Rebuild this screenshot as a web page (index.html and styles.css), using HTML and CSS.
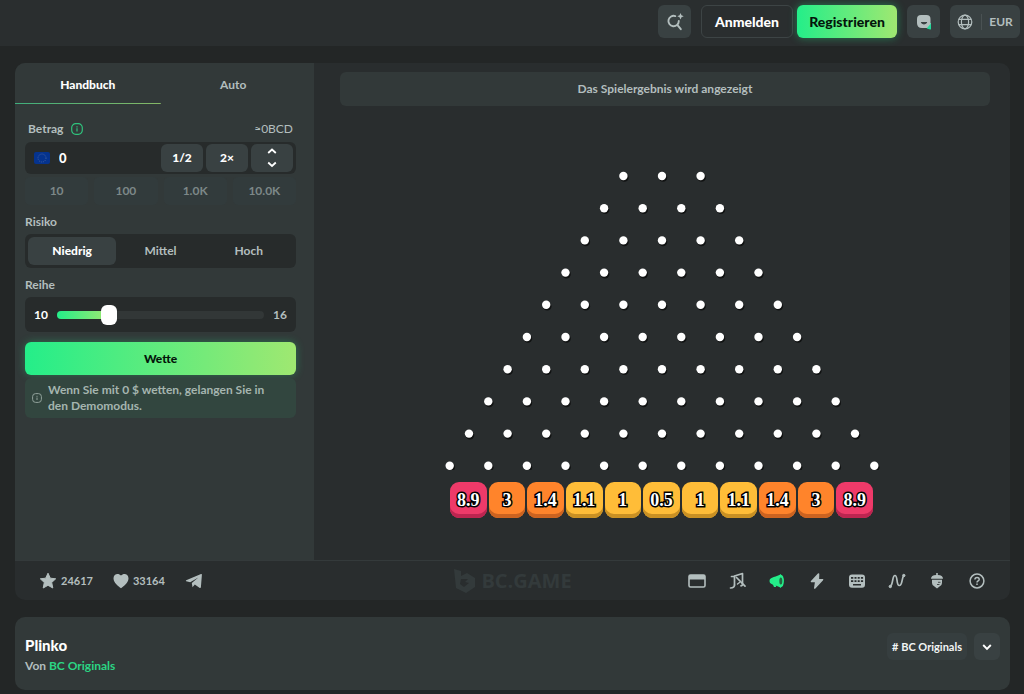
FILE: index.html
```html
<!DOCTYPE html>
<html lang="de">
<head>
<meta charset="utf-8">
<meta name="viewport" content="width=device-width, initial-scale=1">
<title>Plinko</title>
<link rel="stylesheet" href="styles.css">
</head>
<body>
<header class="topbar">
  <button class="icon-btn" aria-label="Suche"><svg width="18" height="18" viewBox="0 0 18 18" fill="none" stroke="#b3bebe" stroke-width="1.900" stroke-linecap="round"><path d="M9.300 3.100A5.200 5.200 0 1 0 12.800 8M11.300 11.800l3.500 4.400"/><path d="M14.500 0l1 2.200 2.200 1-2.200 1-1 2.200-1-2.200-2.200-1 2.200-1z" fill="#b3bebe" stroke="none"/></svg></button>
  <button class="btn-login">Anmelden</button>
  <button class="btn-register">Registrieren</button>
  <button class="icon-btn chat" aria-label="Chat"><svg width="16" height="16" viewBox="0 0 16 16"><path d="M9 9h6v6.500q-4 0-6-3z" fill="#25d99a"/><path d="M5 1h5.500q4 0 4 4v5l-3.500 4H6q-5 0-5-5V5q0-4 4-4z" fill="#b3bebe"/><path d="M5.500 8.500q2.500 2.600 5 0z" stroke="#394142" stroke-width="1.200" fill="#394142" stroke-linejoin="round"/></svg></button>
  <button class="locale"><svg width="16" height="16" viewBox="0 0 16 16" fill="none" stroke="#b3bebe" stroke-width="1.200"><circle cx="8" cy="8" r="6.800"/><ellipse cx="8" cy="8" rx="3.600" ry="6.800"/><path d="M2 5.300h12M2 10.700h12"/></svg><span class="currency">EUR</span></button>
</header>

<main class="page">
  <section class="game">
    <div class="game-main">
      <form class="sidebar" onsubmit="return false">
        <div class="tabs">
          <button type="button" class="tab active">Handbuch</button>
          <button type="button" class="tab">Auto</button>
        </div>
        <div class="controls">
          <div class="bet-head">
            <label for="bet">Betrag</label>
            <svg width="12" height="12" viewBox="0 0 12 12" fill="none" stroke="#2fc27c" stroke-width="1.200"><rect x=".7" y=".7" width="10.600" height="10.600" rx="4"/><path d="M6 5.300v3.200M6 3.200v1.200"/></svg>
            <span class="approx">≈0BCD</span>
          </div>
          <div class="bet-box">
            <svg width="16" height="12" viewBox="0 0 16 12"><rect width="16" height="12" rx="2" fill="#05338e"/><circle cx="8" cy="6" r="4" fill="none" stroke="#4562a0" stroke-width="1" stroke-dasharray="1 1.100"/></svg>
            <input id="bet" class="bet-input" type="text" value="0">
            <button type="button" class="step">1/2</button>
            <button type="button" class="step">2×</button>
            <button type="button" class="step" aria-label="Einsatz ändern"><svg width="10" height="20" viewBox="0 0 10 20" fill="none" stroke="#fff" stroke-width="1.800"><path d="M1.200 5L5 1.500 8.800 5M1.200 14.500L5 18l3.800-3.500"/></svg></button>
          </div>
          <div class="chips">
            <button type="button" class="chip">10</button>
            <button type="button" class="chip">100</button>
            <button type="button" class="chip">1.0K</button>
            <button type="button" class="chip">10.0K</button>
          </div>
          <div class="field-label">Risiko</div>
          <div class="segmented">
            <button type="button" class="segment active">Niedrig</button>
            <button type="button" class="segment">Mittel</button>
            <button type="button" class="segment">Hoch</button>
          </div>
          <label class="field-label" for="rows">Reihe</label>
          <div class="slider">
            <span class="slider-value">10</span>
            <div class="slider-stack">
              <div class="slider-track"><div class="slider-fill"></div></div>
              <input id="rows" class="slider-input" type="range" min="8" max="16" value="10">
            </div>
            <span class="slider-max">16</span>
          </div>
          <button type="submit" class="bet-btn">Wette</button>
          <div class="note">
            <svg width="10" height="10" viewBox="0 0 10 10" fill="none" stroke="#92a39c" stroke-width="1"><rect x=".6" y=".6" width="8.800" height="8.800" rx="3"/><path d="M5 4.500V7M5 2.800v1"/></svg>
            <p>Wenn Sie mit 0 $ wetten, gelangen Sie in den Demomodus.</p>
          </div>
        </div>
      </form>
      <div class="stage">
        <div class="result">Das Spielergebnis wird angezeigt</div>
        <div class="board">
          <svg class="pins" viewBox="0 0 436 300" role="img" aria-label="Plinko"></svg>
          <div class="buckets">
            <div class="bucket red">8.9</div><div class="bucket orange">3</div><div class="bucket orange">1.4</div><div class="bucket yellow">1.1</div><div class="bucket yellow">1</div><div class="bucket yellow">0.5</div><div class="bucket yellow">1</div><div class="bucket yellow">1.1</div><div class="bucket orange">1.4</div><div class="bucket orange">3</div><div class="bucket red">8.9</div>
          </div>
        </div>
      </div>
    </div>
    <div class="game-foot">
      <div class="social">
        <button class="stat"><svg width="18" height="18" viewBox="0 0 18 18" fill="#b3bebe" stroke="#b3bebe" stroke-width="1" stroke-linejoin="round"><path d="M9 1.200l2.300 5 5.400.6-4 3.700 1.100 5.500L9 13.300 4.200 16l1.100-5.500-4-3.700 5.400-.6z"/></svg>24617</button>
        <button class="stat"><svg width="16" height="16" viewBox="0 0 16 16" fill="#b3bebe"><path d="M8 15.300C5.500 13.500.5 10 .5 5.300.5.800 5.600-.3 8 2.600c2.400-2.900 7.500-1.800 7.500 2.700 0 4.700-5 8.200-7.500 10z"/></svg>33164</button>
        <button class="stat" aria-label="Teilen"><svg width="18" height="16" viewBox="0 0 18 16" fill="#b3bebe"><path d="M1.200 7.300L16 1q1-.3.900.7l-1 12.500q-.3 1.300-1.500.5L9.800 11.600 7.500 14.200 6.800 10l6.500-5.500L5.200 9.200 1.200 8.200q-.8-.5 0-.9z"/></svg></button>
      </div>
      <div class="brand"><svg width="24" height="26" viewBox="0 0 24 26"><path d="M1 1l7 2v5l6-3 8 5v9l-9 6-10-5z" fill="#333a3b"/><path d="M8 11l7 0-3 3 4 1-5 4-4-3z" fill="#292d2e"/></svg>BC.GAME</div>
      <div class="tools">
        <button class="tool" aria-label="Theatermodus"><svg width="18" height="14" viewBox="0 0 18 14"><rect x="1" y="1" width="16" height="12" rx="1.500" fill="none" stroke="#b3bebe" stroke-width="1.600"/><path d="M1 1h16v4.500H1z" fill="#b3bebe"/></svg></button>
        <button class="tool" aria-label="Musik"><svg width="18" height="18" viewBox="0 0 18 18" fill="none" stroke="#b3bebe" stroke-width="1.700" stroke-linecap="round" stroke-linejoin="round"><path d="M6.500 13V4L14.500 1.500V12"/><path d="M6.500 13q0 2.800-4 3M14.500 12.500q0 1-1.500 1.300M3.500 4.500h3M8.500 5.500l8.500 8.700"/><path d="M9.500 12l2-1.500" stroke-width="1.400"/></svg></button>
        <button class="tool" aria-label="Ton"><svg width="18" height="18" viewBox="0 0 18 18"><path d="M13 2C9 5 1.500 4.800 1.500 9S9 13 13 16z" fill="#24ee89"/><path d="M4.500 11.500L6 15h2.200l-.7-3z" fill="#24ee89"/><ellipse cx="13" cy="9" rx="2.900" ry="6.200" fill="#24ee89"/><ellipse cx="12.800" cy="9" rx="1.500" ry="3.600" fill="#246743"/></svg></button>
        <button class="tool" aria-label="Turbo"><svg width="16" height="18" viewBox="0 0 16 18" fill="#b3bebe" stroke="#b3bebe" stroke-width="1.600" stroke-linejoin="round"><path d="M9.500 2L2.500 9.500h4.300l-1 6.500 7.700-8.300H9.300z"/></svg></button>
        <button class="tool" aria-label="Tastatur"><svg width="18" height="16" viewBox="0 0 18 16"><rect x="1" y="1.500" width="16" height="13.300" rx="3" fill="#b3bebe"/><path d="M3 4h2.300v1.700H3zM6.500 4h2v1.700h-2zM9.700 4h2v1.700h-2zM12.900 4h2.200v1.700h-2.200zM3 7.200h2.300v1.900H3zM6.500 7.200h2v1.900h-2zM9.700 7.200h2v1.900h-2zM12.900 7.200h2.200v1.900h-2.200zM5 11h8v1.500H5z" fill="#292d2e"/></svg></button>
        <button class="tool" aria-label="Trends"><svg width="18" height="16" viewBox="0 0 18 16" fill="none" stroke="#b3bebe" stroke-width="1.700"><path d="M2.300 13.500C5.500 11 4 2.500 7 2.500S8 12.500 11.300 12.500 13.500 5 15.800 2.700"/><circle cx="2.300" cy="13.500" r="1.200" fill="#b3bebe" stroke-width="1"/><circle cx="15.800" cy="2.500" r="1.200" fill="#b3bebe" stroke-width="1"/></svg></button>
        <button class="tool" aria-label="Seed"><svg width="14" height="18" viewBox="0 0 14 18" fill="#b3bebe"><path d="M6.200 1h1.600v2q5.200.3 5.200 3.800H1Q1 3.300 6.200 3z"/><path d="M2 7.800h10V11q0 2.500-2.500 3.600L7 16.500l-2.500-1.900Q2 13.500 2 11z"/><path d="M8 10.300h2.500M7 12.500h2.500" stroke="#292d2e" stroke-width=".8"/></svg></button>
        <button class="tool" aria-label="Hilfe"><svg width="16" height="16" viewBox="0 0 16 16" fill="none" stroke="#b3bebe" stroke-width="1.500"><circle cx="8" cy="8" r="6.900"/><path d="M5.900 6.600c0-3 4.400-2.800 4.300-.2 0 1.500-2.200 1.500-2.200 3.100M8 10.600v1.400"/></svg></button>
      </div>
    </div>
  </section>

  <section class="info">
    <div class="info-text">
      <h1 class="title">Plinko</h1>
      <p class="by">Von <a class="provider" href="#">BC Originals</a></p>
    </div>
    <div class="info-actions">
      <a class="tag" href="#"># BC Originals</a>
      <button class="expand" aria-label="Mehr anzeigen"><svg width="10" height="8" viewBox="0 0 10 8" fill="none" stroke="#fff" stroke-width="1.900"><path d="M1.200 2L5 5.800 8.800 2"/></svg></button>
    </div>
  </section>
</main>
<script src="board.js"></script>
</body>
</html>
```

FILE: styles.css
```css
* { box-sizing: border-box; }
body {
  margin: 0;
  background: #232626;
  color: #b3bebe;
  font: 700 12px/16px Lato, "Noto Sans", sans-serif;
}
button, input { font: inherit; color: inherit; border: 0; padding: 0; margin: 0; background: none; }
button { display: flex; align-items: center; justify-content: center; }
a { text-decoration: none; }
p, h1 { margin: 0; }
svg { flex: none; }

.topbar {
  display: flex;
  justify-content: flex-end;
  gap: 10px;
  height: 46px;
  padding: 5px 4px 8px 16px;
  background: #2a2e2f;
}
.icon-btn { width: 33px; border-radius: 6px; background: #394142; }
.btn-login { width: 92px; border: 1px solid #3d4445; border-radius: 6px; color: #fff; font-size: 14px; font-weight: 900; }
.btn-register {
  width: 100px;
  margin-left: -6px;
  border-radius: 6px;
  background: linear-gradient(90deg, #24ee89, #9fe871);
  box-shadow: 0 0 8px #24ee8966;
  color: #04150b;
  font-size: 14px;
  font-weight: 900;
}
.locale { gap: 8px; width: 70px; border-radius: 6px; background: #394142; }
.currency { padding-left: 7px; border-left: 1px solid #4a5253; font-size: 12px; }

.page { display: flex; flex-direction: column; gap: 17px; padding: 17px 14px 4px 15px; }
.game { overflow: hidden; border-radius: 10px; background: #292d2e; }
.game-main { display: grid; grid-template-columns: 299px 1fr; min-height: 497px; }
.sidebar { background: #323939; }
.tabs { display: grid; grid-template-columns: 1fr 1fr; padding-right: 8px; }
.tab { height: 41px; padding-top: 3px; }
.tab.active { background: linear-gradient(90deg, #3fae7c, #86b866) bottom / 100% 1px no-repeat; color: #fff; font-weight: 900; }
.controls { display: flex; flex-direction: column; padding: 17px 18px 0 10px; }

.bet-head { display: flex; align-items: center; gap: 8px; padding: 0 3px; }
.approx { margin-left: auto; font-weight: 400; }
.bet-box {
  display: flex;
  align-items: center;
  gap: 3px;
  height: 32px;
  margin-top: 5px;
  padding: 2px 3px 2px 9px;
  border-radius: 6px;
  background: #272b2b;
}
.bet-input { flex: 1; min-width: 0; padding-left: 6px; color: #fff; font-size: 13px; font-weight: 900; }
.step { width: 42px; height: 28px; border-radius: 6px; background: #394142; color: #fff; font-weight: 900; }
.chips { display: grid; grid-template-columns: repeat(4, 1fr); gap: 6px; margin-top: 3px; }
.chip { height: 28px; border-radius: 5px; background: #323b3c; color: #7d8888; }

.field-label { margin-top: 8px; line-height: 17px; }
.segmented {
  display: grid;
  grid-template-columns: repeat(3, 1fr);
  height: 34px;
  margin-top: 4px;
  padding: 3px;
  border-radius: 6px;
  background: #272b2b;
}
.segment { border-radius: 6px; }
.segment.active { background: #394142; color: #fff; font-weight: 900; }
.slider {
  display: flex;
  align-items: center;
  gap: 9px;
  height: 35px;
  margin-top: 4px;
  padding: 0 9px;
  border-radius: 6px;
  background: #272b2b;
}
.slider-value { color: #fff; }
.slider-stack { display: grid; flex: 1; align-items: center; }
.slider-track, .slider-input { grid-area: 1 / 1; }
.slider-track { height: 8px; border-radius: 4px; background: #323737; }
.slider-fill { width: 25%; height: 8px; border-radius: 4px; background: linear-gradient(90deg, #24ee89, #9fe871); }
.slider-input { -webkit-appearance: none; appearance: none; height: 20px; margin: 0 -8px; }
.slider-input::-webkit-slider-thumb { -webkit-appearance: none; width: 16px; height: 20px; border-radius: 6px; background: #fff; }
.bet-btn {
  height: 33px;
  margin-top: 10px;
  border-radius: 6px;
  background: linear-gradient(90deg, #24ee89, #9fe871);
  box-shadow: 0 0 8px #24ee8950;
  color: #04150b;
  font-weight: 900;
}
.note {
  display: flex;
  align-items: center;
  gap: 6px;
  margin-top: 3px;
  padding: 4px 16px 4px 7px;
  border-radius: 6px;
  background: #32463f;
  color: #a5b5af;
}

.stage { display: flex; flex-direction: column; align-items: center; padding: 9px 20px 0; }
.result { align-self: stretch; margin-left: 6px; padding: 9px; border-radius: 6px; background: #323939; text-align: center; }
.board { width: 100%; max-width: 436px; margin-top: 64px; }
.pins { display: block; width: 100%; }
.pin { fill: #fff; }
.pin-shadow { fill: #0009; }
.buckets { display: grid; grid-template-columns: repeat(11, 1fr); gap: 2px; margin: 12px 7px 0 6px; }
.bucket {
  border-radius: 9px;
  color: #fff;
  font: 700 18px/36px "Liberation Serif", serif;
  text-align: center;
  -webkit-text-stroke: 3px #000;
  paint-order: stroke fill;
  text-shadow: 0 1px 0 #000;
}
.red { background: #ee3a69; box-shadow: inset 0 -4px #bd2550; }
.orange { background: #ff842b; box-shadow: inset 0 -4px #cc6320; }
.yellow { background: #ffbd38; box-shadow: inset 0 -4px #c99023; }

.game-foot {
  display: grid;
  grid-template-columns: 1fr auto 1fr;
  align-items: center;
  height: 40px;
  padding: 0 24px;
  border-top: 1px solid #343a3b;
}
.social { display: flex; gap: 20px; }
.stat { gap: 4px; font-size: 11px; }
.brand { display: flex; align-items: center; gap: 4px; color: #333a3b; font: 700 20px/24px "Open Sans", sans-serif; }
.tools { display: flex; justify-content: flex-end; gap: 22px; }
.tool { width: 18px; height: 18px; }

.info { display: flex; justify-content: space-between; padding: 16px 10px; border-radius: 10px; background: #323939; }
.title { color: #fff; font-size: 15px; font-weight: 900; line-height: 24px; }
.by { line-height: 17px; }
.provider { color: #2bd584; }
.info-actions { display: flex; gap: 7px; height: 27px; }
.tag { padding: 6px 5px; border-radius: 6px; background: #363e3f; color: #f2f5f5; font-size: 11px; line-height: 15px; }
.expand { width: 26px; border-radius: 6px; background: #394142; }
```

FILE: board.js
```js
const svg = document.querySelector(".pins");
const ns = "http://www.w3.org/2000/svg";
const rows = 10;
const pitchX = 38.6;
const pitchY = 32.2;

function dot(x, y, r, name) {
  const c = document.createElementNS(ns, "circle");
  c.setAttribute("cx", x);
  c.setAttribute("cy", y);
  c.setAttribute("r", r);
  c.setAttribute("class", name);
  svg.append(c);
}

for (let row = 0; row < rows; row++) {
  const count = row + 3;
  for (let i = 0; i < count; i++) {
    const x = 218 + (i - (count - 1) / 2) * pitchX;
    const y = 6 + row * pitchY;
    dot(x + 1, y + 1.5, 4.3, "pin-shadow");
    dot(x, y, 4.2, "pin");
  }
}
```
